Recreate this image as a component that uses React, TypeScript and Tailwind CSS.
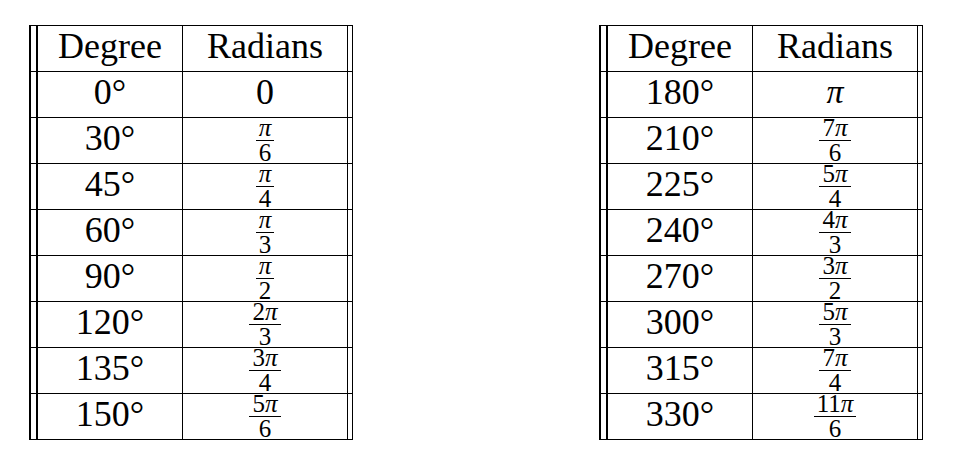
import React from "react";

type Cell = { deg: string; num?: string; den?: string; plain?: string; pi?: boolean };

const left: Cell[] = [
  { deg: "0", plain: "0" },
  { deg: "30", num: "π", den: "6" },
  { deg: "45", num: "π", den: "4" },
  { deg: "60", num: "π", den: "3" },
  { deg: "90", num: "π", den: "2" },
  { deg: "120", num: "2π", den: "3" },
  { deg: "135", num: "3π", den: "4" },
  { deg: "150", num: "5π", den: "6" },
];

const right: Cell[] = [
  { deg: "180", plain: "π", pi: true },
  { deg: "210", num: "7π", den: "6" },
  { deg: "225", num: "5π", den: "4" },
  { deg: "240", num: "4π", den: "3" },
  { deg: "270", num: "3π", den: "2" },
  { deg: "300", num: "5π", den: "3" },
  { deg: "315", num: "7π", den: "4" },
  { deg: "330", num: "11π", den: "6" },
];

function MathText({ s }: { s: string }) {
  const parts = s.split("π");
  return (
    <>
      {parts.map((p, i) => (
        <React.Fragment key={i}>
          {p}
          {i < parts.length - 1 && <span className="italic">π</span>}
        </React.Fragment>
      ))}
    </>
  );
}

function Frac({ num, den }: { num: string; den: string }) {
  return (
    <div className="flex flex-col items-stretch text-[25px]">
      <div className="h-[20px] leading-[20px] text-center px-[3px]">
        <MathText s={num} />
      </div>
      <div className="h-px bg-black mt-[2px]" />
      <div className="h-[20px] leading-[20px] text-center px-[3px] mt-[2px]">{den}</div>
    </div>
  );
}

function Row({ a, b }: { a: React.ReactNode; b: React.ReactNode }) {
  return (
    <div className="flex h-[46px] border-t border-black">
      <div className="w-[2px] bg-black" />
      <div className="w-[5px]" />
      <div className="w-[2px] bg-black" />
      <div className="w-[144px] flex items-center justify-center">{a}</div>
      <div className="w-px bg-black" />
      <div className="w-[164px] flex items-center justify-center">{b}</div>
      <div className="w-px bg-black" />
      <div className="w-[4px]" />
      <div className="w-px bg-black" />
    </div>
  );
}

function Table({ rows }: { rows: Cell[] }) {
  return (
    <div className="flex flex-col w-[324px]">
      <Row
        a={<span className="pb-[6px]">Degree</span>}
        b={<span className="pb-[6px]">Radians</span>}
      />
      {rows.map((r, i) => (
        <Row
          key={i}
          a={<span className="pb-[6px]">{r.deg}°</span>}
          b={
            r.plain !== undefined ? (
              r.pi ? (
                <span className="pb-[6px] italic text-[34px]">π</span>
              ) : (
                <span className="pb-[6px]">{r.plain}</span>
              )
            ) : (
              <Frac num={r.num!} den={r.den!} />
            )
          }
        />
      ))}
      <div className="h-px bg-black" />
    </div>
  );
}

export default function App() {
  return (
    <div
      className="w-[958px] h-[463px] bg-white text-black text-[36px] flex pl-[29px] pt-[25px] gap-[246px]"
      style={{ fontFamily: '"Liberation Serif", "Times New Roman", serif' }}
    >
      <Table rows={left} />
      <Table rows={right} />
    </div>
  );
}
